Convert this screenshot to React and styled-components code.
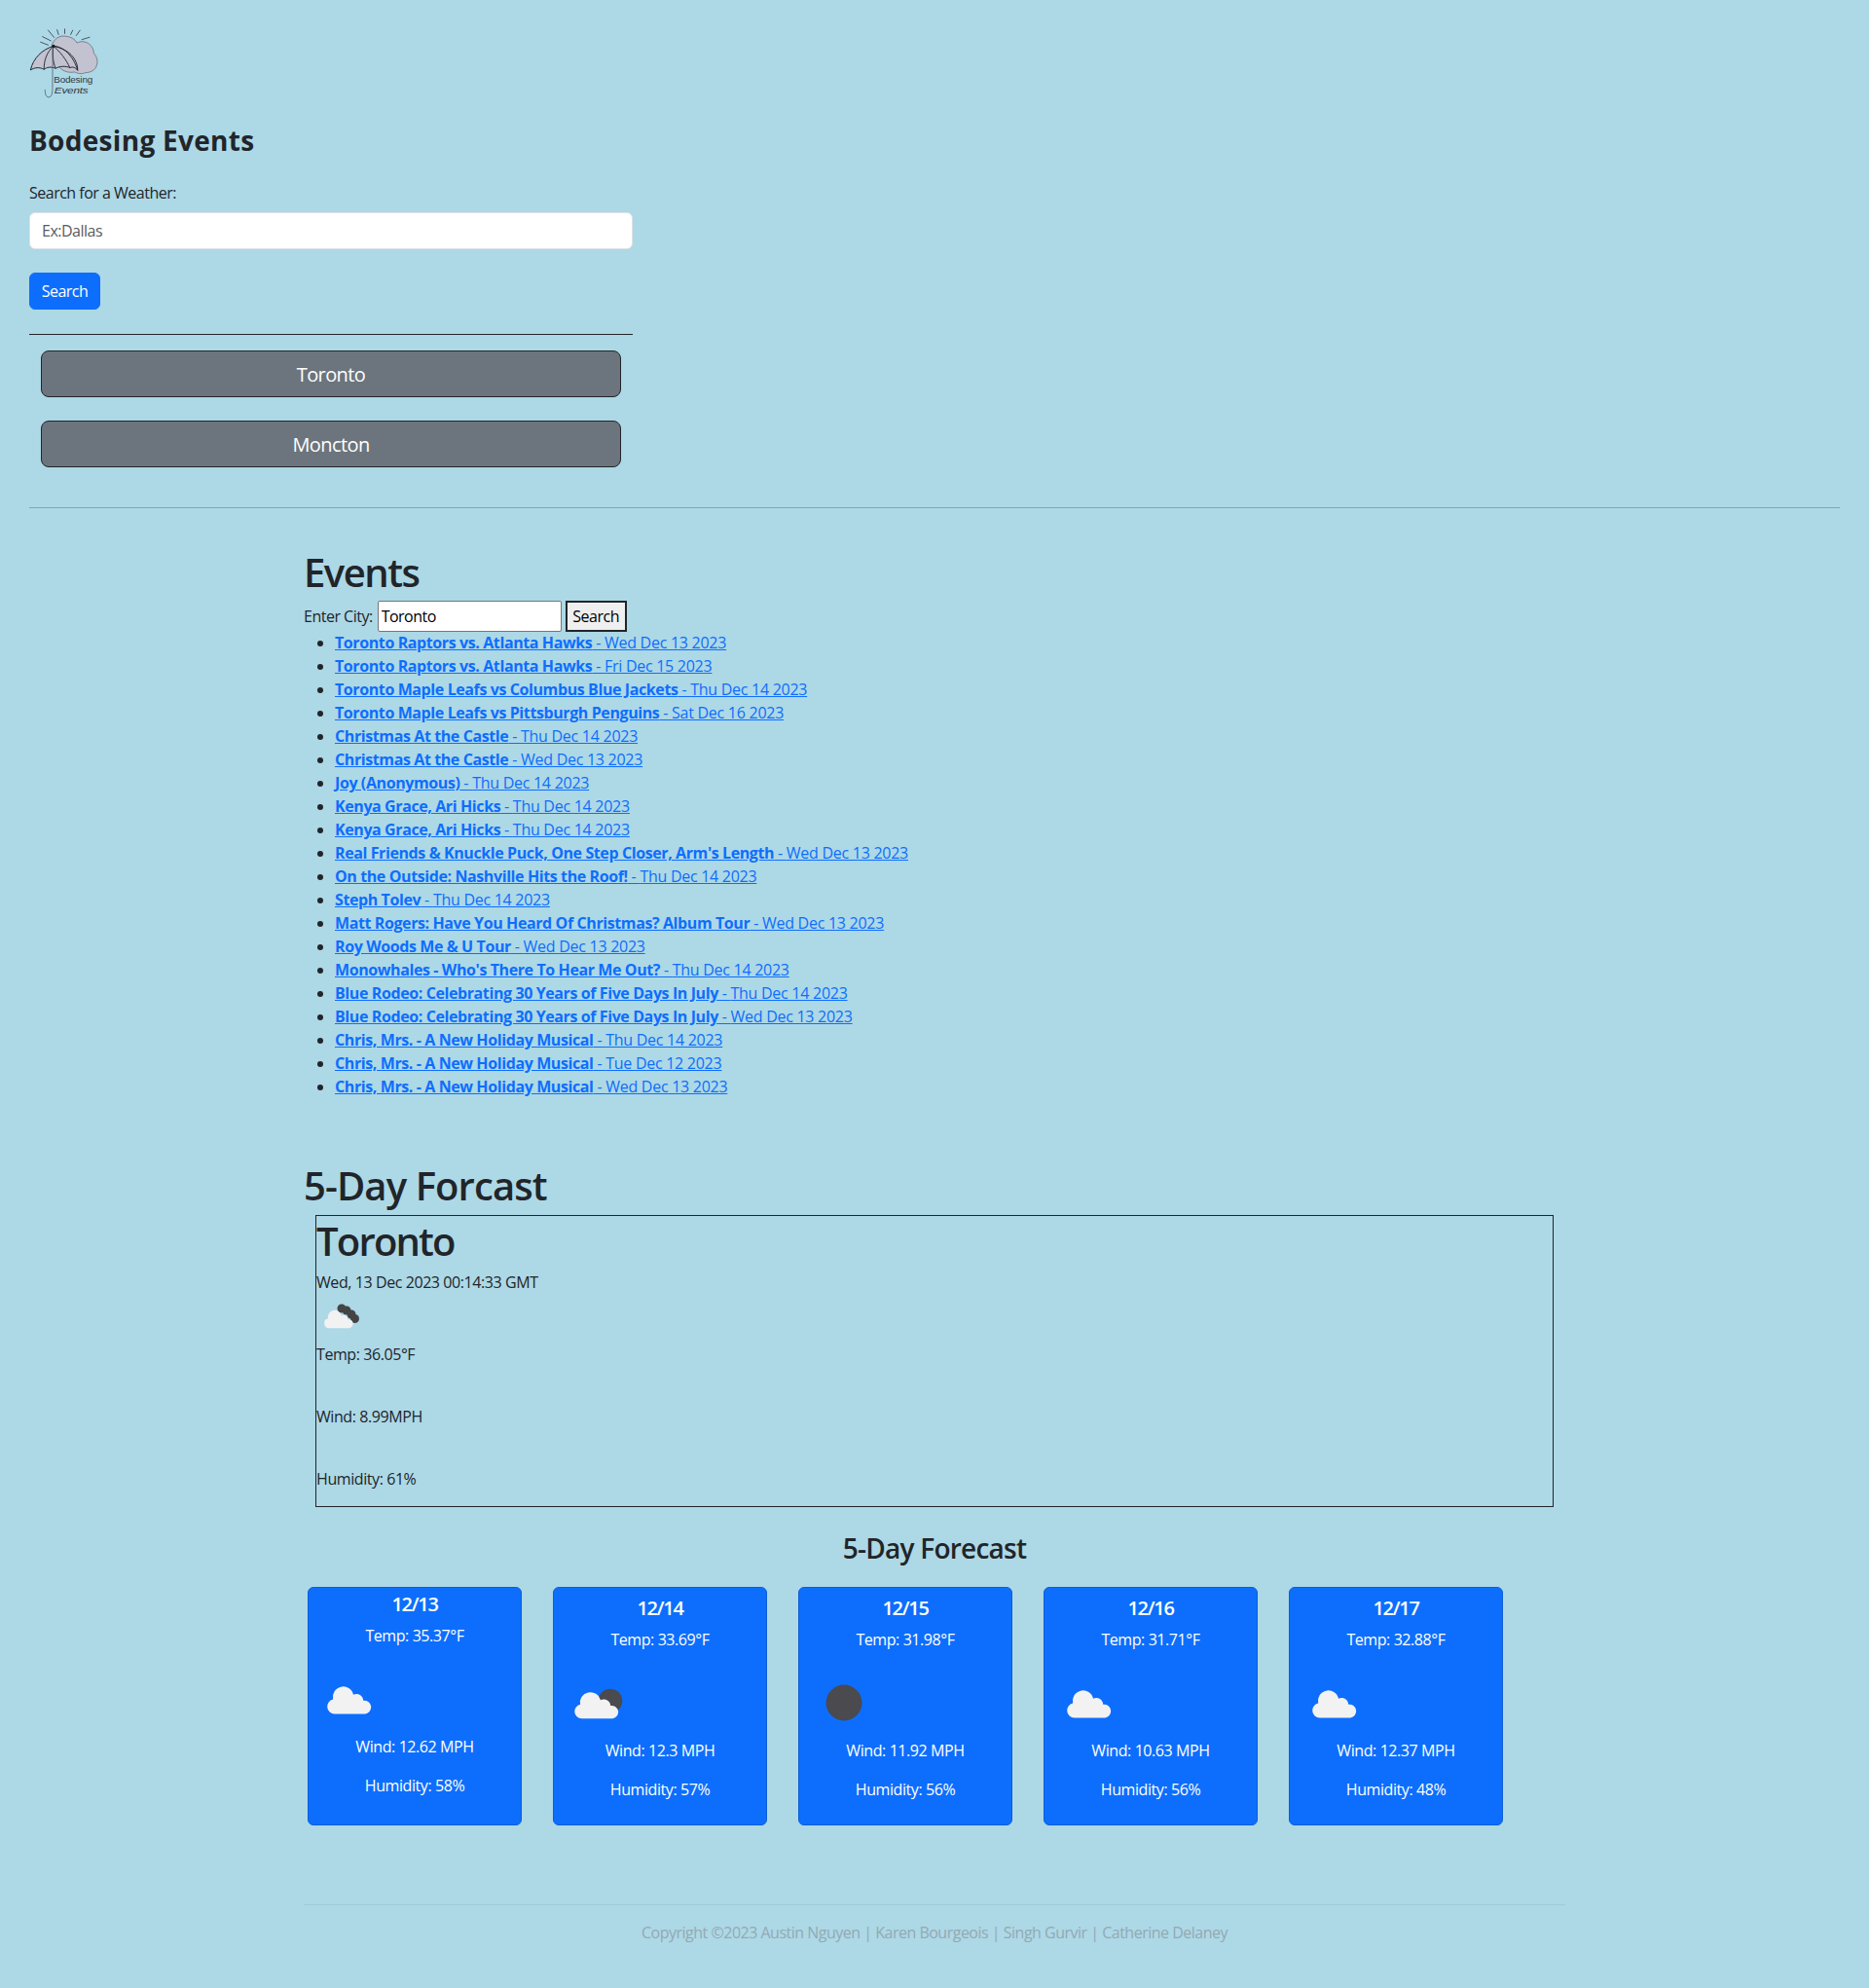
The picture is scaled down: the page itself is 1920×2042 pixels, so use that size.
import styled, { createGlobalStyle } from 'styled-components';

const GlobalStyle = createGlobalStyle`
  * {
    box-sizing: border-box;
  }

  body {
    margin: 0;
    min-height: 2042px;
    background: #add8e6;
    color: #212529;
    font-family: 'Open Sans', 'Noto Sans', sans-serif;
    font-size: 16px;
    line-height: 1.5;
    letter-spacing: -0.5px;
  }
`;

const Header = styled.header`
  padding: 28px 30px 0;
`;

const LogoMark = styled.svg`
  display: block;
  width: 73px;
  height: 75px;
`;

const Brand = styled.h3`
  margin: 25px 0 24.4px;
  font-size: 28px;
  font-weight: 700;
  line-height: 1.2;
  letter-spacing: 0.3px;
`;

const SearchForm = styled.div`
  width: 620px;
`;

const Label = styled.label`
  display: block;
  margin-bottom: 8px;
`;

const TextField = styled.input`
  display: block;
  width: 100%;
  height: 38px;
  padding: 6px 12px;
  border: 1px solid #dee2e6;
  border-radius: 6px;
  background: #fff;
  color: #212529;
  font: inherit;
  letter-spacing: inherit;
  margin-bottom: 24px;

  &::placeholder {
    color: #595c5f;
    opacity: 1;
  }
`;

const PrimaryButton = styled.button`
  display: block;
  width: 73px;
  height: 38px;
  border: 1px solid #0d6efd;
  border-radius: 6px;
  background: #0d6efd;
  color: #fff;
  font: inherit;
  letter-spacing: inherit;
`;

const DarkRule = styled.hr`
  margin: 25.4px 0 15.6px;
  border: 0;
  border-top: 1px solid #212529;
`;

const CityList = styled.div`
  display: flex;
  flex-direction: column;
  gap: 24px;
  padding: 0 12px;
`;

const CityButton = styled.button`
  height: 48px;
  padding-top: 3px;
  border: 1px solid #212529;
  border-radius: 8px;
  background: #6c757d;
  color: #fff;
  font: inherit;
  font-size: 20px;
  letter-spacing: -0.6px;
`;

const PageRule = styled.hr`
  margin: 41px 30px 0;
  border: 0;
  border-top: 1px solid #7fa6b6;
`;

const Main = styled.main`
  width: 1296px;
  margin: 0 auto;
`;

const SectionTitle = styled.h2`
  margin: 0;
  padding-top: ${(p) => p.$top}px;
  font-size: 40px;
  font-weight: 600;
  line-height: 48px;
  letter-spacing: ${(p) => p.$spacing}px;
`;

const CityRow = styled.div`
  display: flex;
  align-items: center;
  height: 36px;
  margin-top: 3px;
  margin-bottom: -3px;
`;

const PlainInput = styled.input`
  width: 189px;
  height: 32px;
  margin: 0 4px 0 5px;
  padding: 1px 3px;
  border: 1px solid #767676;
  border-radius: 2px;
  background: #fff;
  color: #000;
  font: inherit;
  letter-spacing: inherit;
`;

const PlainButton = styled.button`
  width: 63px;
  height: 32px;
  padding: 0;
  border: 2px solid #212529;
  background: #efefef;
  color: #000;
  font: inherit;
  letter-spacing: inherit;
`;

const EventList = styled.ul`
  margin: 0;
  padding-left: 32px;
`;

const EventItem = styled.li`
  height: 24px;

  &::marker {
    color: #212529;
  }
`;

const EventLink = styled.a`
  color: #0d6efd;
  text-decoration: underline;
  letter-spacing: -0.27px;

  strong {
    font-weight: 700;
    letter-spacing: -0.4px;
  }
`;

const CurrentBox = styled.section`
  width: 1272px;
  height: 300px;
  margin: 6px 0 0 12px;
  border: 1px solid #212529;
`;

const CurrentCity = styled.h2`
  margin: 2px 0 6px;
  font-size: 40px;
  font-weight: 600;
  line-height: 48px;
  letter-spacing: -1.8px;
`;

const CurrentLine = styled.p`
  margin: 0 0 ${(p) => p.$gap || 0}px;
  letter-spacing: -0.42px;
`;

const CurrentIcon = styled.svg`
  display: block;
  width: 50px;
  height: 50px;
`;

const ForecastTitle = styled.h3`
  margin: 25px 0 23px;
  text-align: center;
  font-size: 28px;
  font-weight: 600;
  line-height: 34px;
  letter-spacing: -0.75px;
`;

const CardRow = styled.div`
  display: flex;
  gap: 32px;
  padding-left: 4px;
`;

const Card = styled.article`
  display: flex;
  flex-direction: column;
  width: 220px;
  height: 245px;
  padding: ${(p) => (p.$first ? 5 : 9)}px 8px 0;
  border: 1px solid #0b5ed7;
  border-radius: 6px;
  background: #0d6efd;
  color: #fff;
  text-align: center;
`;

const CardDate = styled.h5`
  margin: 0 0 8px;
  font-size: 20px;
  font-weight: 600;
  line-height: 24px;
  letter-spacing: -1.3px;
`;

const CardLine = styled.p`
  margin: 0 0 16px;
  letter-spacing: -0.42px;
`;

const CardIcon = styled.svg`
  display: block;
  flex: none;
  width: 74px;
  height: 74px;
`;

const Footer = styled.footer`
  margin-top: 81px;
  padding-top: 16px;
  border-top: 1px solid #a0cbd8;
  color: #93a9b3;
  text-align: center;
`;

const CLOUD = 'M7.5 29A7.5 7.5 0 0 1 6 14.2 10.5 10.5 0 0 1 26.5 9.5 7 7 0 0 1 36.5 15.5 6.8 6.8 0 0 1 38.5 29Z';

const events = [
  ['Toronto Raptors vs. Atlanta Hawks', 'Wed Dec 13 2023'],
  ['Toronto Raptors vs. Atlanta Hawks', 'Fri Dec 15 2023'],
  ['Toronto Maple Leafs vs Columbus Blue Jackets', 'Thu Dec 14 2023'],
  ['Toronto Maple Leafs vs Pittsburgh Penguins', 'Sat Dec 16 2023'],
  ['Christmas At the Castle', 'Thu Dec 14 2023'],
  ['Christmas At the Castle', 'Wed Dec 13 2023'],
  ['Joy (Anonymous)', 'Thu Dec 14 2023'],
  ['Kenya Grace, Ari Hicks', 'Thu Dec 14 2023'],
  ['Kenya Grace, Ari Hicks', 'Thu Dec 14 2023'],
  ["Real Friends & Knuckle Puck, One Step Closer, Arm's Length", 'Wed Dec 13 2023'],
  ['On the Outside: Nashville Hits the Roof!', 'Thu Dec 14 2023'],
  ['Steph Tolev', 'Thu Dec 14 2023'],
  ['Matt Rogers: Have You Heard Of Christmas? Album Tour', 'Wed Dec 13 2023'],
  ['Roy Woods Me & U Tour', 'Wed Dec 13 2023'],
  ["Monowhales - Who's There To Hear Me Out?", 'Thu Dec 14 2023'],
  ['Blue Rodeo: Celebrating 30 Years of Five Days In July', 'Thu Dec 14 2023'],
  ['Blue Rodeo: Celebrating 30 Years of Five Days In July', 'Wed Dec 13 2023'],
  ['Chris, Mrs. - A New Holiday Musical', 'Thu Dec 14 2023'],
  ['Chris, Mrs. - A New Holiday Musical', 'Tue Dec 12 2023'],
  ['Chris, Mrs. - A New Holiday Musical', 'Wed Dec 13 2023'],
];

const forecast = [
  { date: '12/13', temp: '35.37', wind: '12.62', humidity: 58, icon: 'cloud', at: 'translate(11 23) scale(1.02)' },
  { date: '12/14', temp: '33.69', wind: '12.3', humidity: 57, icon: 'partly', at: 'translate(13 25) scale(1.02 .97)' },
  { date: '12/15', temp: '31.98', wind: '11.92', humidity: 56, icon: 'moon' },
  { date: '12/16', temp: '31.71', wind: '10.63', humidity: 56, icon: 'cloud', at: 'translate(15 23) scale(1.02)' },
  { date: '12/17', temp: '32.88', wind: '12.37', humidity: 48, icon: 'cloud', at: 'translate(15 23) scale(1.02)' },
];

function Logo() {
  return (
    <LogoMark viewBox="60 40 220 225" aria-label="Bodesing Events logo">
      <g stroke="#4b5560" strokeWidth="3" fill="none">
        <path d="M118 48l20 24M146 46l5 17M170 44v16M195 48l-7 15M218 48l-13 18M248 70l-26 8M100 68l28 14M94 85l26 10" />
      </g>
      <path
        d="M130 98c4-22 24-36 48-30 12 2 24 8 30 20 14-8 34-4 44 10 6 8 8 16 8 22 10 10 14 26 8 40-4 12-18 20-34 20-12 6-26 2-34-2-20 4-40-4-50-20z"
        fill="#c2c2d0"
        stroke="#6b6f7c"
        strokeWidth="2.5"
      />
      <path
        d="M135 98C100 108 72 136 64 172c12-8 28-10 42-2 6-6 22-10 36-3 12-8 34-8 44-2 8-4 16-2 24 8 0-36-28-66-75-75z"
        fill="#c2c2d0"
        stroke="#23262b"
        strokeWidth="3"
        strokeLinejoin="round"
      />
      <g stroke="#23262b" strokeWidth="2.8" fill="none">
        <path d="M135 98c-20 18-30 44-29 72M135 98c-4 22-2 48 7 69M135 98c20 16 40 42 51 67M135 98c30 0 62 30 75 75" />
        <path d="M133 100l-1 128c0 18-3 28-12 28s-11-12-11-24" strokeWidth="2.2" stroke="#3f5464" />
      </g>
      <circle cx="135" cy="98" r="5" fill="#1c1c1c" />
      <text x="136" y="212" fontFamily="'Liberation Sans', sans-serif" fontSize="27" fill="#2f3842" textLength="120" lengthAdjust="spacingAndGlyphs">
        Bodesing
      </text>
      <text x="138" y="244" fontFamily="'Liberation Sans', sans-serif" fontStyle="italic" fontSize="27" fill="#2f3842" textLength="104" lengthAdjust="spacingAndGlyphs">
        Events
      </text>
    </LogoMark>
  );
}

function WeatherGlyph({ icon, at }) {
  return (
    <CardIcon viewBox="0 0 74 74">
      {icon === 'moon' && <circle cx="38" cy="37" r="18.5" fill="#4a4a4f" />}
      {icon === 'partly' && <circle cx="50" cy="35" r="12.3" fill="#4a4a4f" />}
      {icon !== 'moon' && <path d={CLOUD} transform={at} fill="#f2f2f2" />}
    </CardIcon>
  );
}

export default function App() {
  return (
    <>
      <GlobalStyle />
      <Header>
        <Logo />
        <Brand>Bodesing Events</Brand>
        <SearchForm>
          <Label>Search for a Weather:</Label>
          <TextField placeholder="Ex:Dallas" />
          <PrimaryButton>Search</PrimaryButton>
          <DarkRule />
          <CityList>
            <CityButton>Toronto</CityButton>
            <CityButton>Moncton</CityButton>
          </CityList>
        </SearchForm>
      </Header>
      <PageRule />
      <Main>
        <SectionTitle $top={42} $spacing={-1.5}>Events</SectionTitle>
        <CityRow>
          Enter City:
          <PlainInput defaultValue="Toronto" />
          <PlainButton>Search</PlainButton>
        </CityRow>
        <EventList>
          {events.map(([name, date], i) => (
            <EventItem key={i}>
              <EventLink href="#">
                <strong>{name}</strong> - {date}
              </EventLink>
            </EventItem>
          ))}
        </EventList>
        <SectionTitle $top={66} $spacing={-0.9}>5-Day Forcast</SectionTitle>
        <CurrentBox>
          <CurrentCity>Toronto</CurrentCity>
          <CurrentLine>Wed, 13 Dec 2023 00:14:33 GMT</CurrentLine>
          <CurrentIcon viewBox="0 0 50 50">
            <circle cx="26" cy="15" r="4.5" fill="#444" />
            <circle cx="31" cy="17" r="4.5" fill="#444" />
            <circle cx="36" cy="21" r="4.5" fill="#444" />
            <circle cx="39.5" cy="25.5" r="4.5" fill="#444" />
            <path d={CLOUD} transform="translate(8 16) scale(.67 .66)" fill="#f2f2f2" />
          </CurrentIcon>
          <CurrentLine $gap={40}>Temp: 36.05°F</CurrentLine>
          <CurrentLine $gap={40}>Wind: 8.99MPH</CurrentLine>
          <CurrentLine>Humidity: 61%</CurrentLine>
        </CurrentBox>
        <ForecastTitle>5-Day Forecast</ForecastTitle>
        <CardRow>
          {forecast.map((day, i) => (
            <Card key={day.date} $first={i === 0}>
              <CardDate>{day.date}</CardDate>
              <CardLine>Temp: {day.temp}°F</CardLine>
              <WeatherGlyph icon={day.icon} at={day.at} />
              <CardLine>Wind: {day.wind} MPH</CardLine>
              <CardLine>Humidity: {day.humidity}%</CardLine>
            </Card>
          ))}
        </CardRow>
        <Footer>Copyright ©2023 Austin Nguyen | Karen Bourgeois | Singh Gurvir | Catherine Delaney</Footer>
      </Main>
    </>
  );
}
